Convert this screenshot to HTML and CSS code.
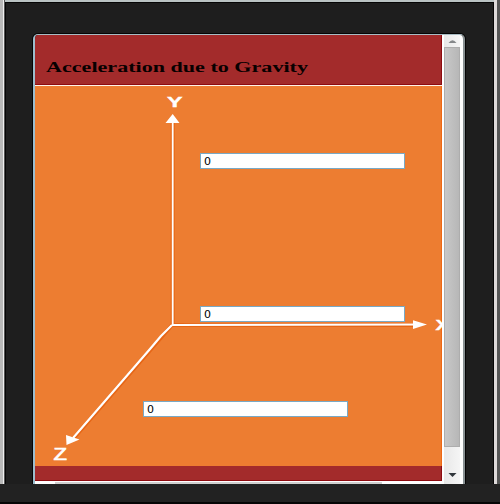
FILE: index.html
```
<!DOCTYPE html>
<html lang="en">
<head>
<meta charset="utf-8">
<title>Acceleration due to Gravity</title>
<link rel="stylesheet" href="styles.css">
</head>
<body>
<div class="device">
  <main class="screen">
    <section class="content">
      <header class="header">
        <svg class="title" width="290" height="24" role="heading" aria-level="1"><text x="0" y="15" textLength="262" lengthAdjust="spacingAndGlyphs">Acceleration due to Gravity</text></svg>
      </header>
      <div class="diagram">
        <svg class="axes" width="407" height="380" viewBox="35 86 407 380">
          <g class="halo">
            <path d="M172.700 122V325H416M172 325L73 439"/>
          </g>
          <path class="line" d="M172.700 122V325"/>
          <path class="line" d="M172 325L415 324.500"/>
          <path class="line diagonal" d="M172 325L161 336L150 349L73 438"/>
          <path class="arrow" d="M172.700 114L179.500 123H165.500ZM413 320.300L427 324.500L413 329ZM66 435L79.500 439.500L66.500 445Z"/>
          <text x="167" y="107" textLength="15.500" lengthAdjust="spacingAndGlyphs">Y</text>
          <text x="435.500" y="330" textLength="14" lengthAdjust="spacingAndGlyphs">X</text>
          <text class="z" x="53.500" y="459.500" textLength="13.500" lengthAdjust="spacingAndGlyphs">Z</text>
        </svg>
        <input class="field field-y" type="text" value="0" aria-label="Y">
        <input class="field field-x" type="text" value="0" aria-label="X">
        <input class="field field-z" type="text" value="0" aria-label="Z">
      </div>
      <div class="footer"></div>
      <div class="hscroll"><div class="hthumb"></div></div>
    </section>
    <aside class="vscroll">
      <svg width="19" height="12"><path d="M5.500 8Q9.500 2.500 13.500 8Z" fill="#85888a"/></svg>
      <div class="vthumb"></div>
      <svg class="down" width="19" height="37"><path d="M5.500 26H13.500L9.500 30Z" fill="#30363b"/></svg>
    </aside>
  </main>
</div>
<div class="base"></div>
</body>
</html>
```
FILE: styles.css
```
* { box-sizing: border-box; }
body {
  margin: 0;
  width: 500px;
  height: 504px;
  overflow: hidden;
  background: #222;
}
.device {
  height: 484px;
  padding: 32px 29px 0 28px;
  border-style: solid;
  border-color: #bac3c3;
  border-width: 2px 6px 0 5px;
  background: #1e1e1e;
  box-shadow: inset 1px 1px 0 #050505, inset -1px 0 0 #050505;
  background-clip: padding-box;
  border-image: linear-gradient(90deg, #b9b9b9 0 3px, #efefef 3px 4px, #555 4px 5px, #bac3c3 5px 494px, #dedada 494px 497px, #555 497px) 2 6 0 5;
}
.screen {
  display: flex;
  width: 432px;
  height: 450px;
  overflow: hidden;
  border: 1px solid #a9bcc4;
  border-left: 2px solid #9dbdcd;
  border-right: 2px solid #899193;
  border-bottom: 0;
  border-radius: 5px 5px 0 0;
  box-shadow: 0 0 0 1px #050505;
}
.content { width: 407px; }
.header {
  height: 50px;
  padding: 22px 0 0 11px;
  background: #a32b2b;
  border-bottom: 1px solid #8e0b10;
  box-shadow: inset -1px 0 0 #8e0b10;
}
.title { display: block; }
.title text {
  font: bold 14px "Liberation Serif", serif;
  fill: #080000;
}
.diagram {
  position: relative;
  height: 381px;
  background: #ed7d31;
  border-top: 1px solid #fff3e8;
  box-shadow: inset -1px 0 0 #ef6814;
}
.axes { display: block; }
.halo {
  fill: none;
  stroke: #e66616;
  stroke-width: 4;
}
.line {
  fill: none;
  stroke: #fff;
  stroke-width: 1.800;
}
.diagonal { stroke-width: 2.200; }
.arrow { fill: #fff; }
.axes text {
  font: bold 15.500px "Liberation Sans", sans-serif;
  fill: #fff;
  stroke: #fff;
  stroke-width: .4px;
}
.axes .z { font-size: 16px; font-weight: normal; stroke-width: .6px; }
.field {
  position: absolute;
  width: 205px;
  height: 16px;
  padding: 0 3px;
  border: 1px solid #79a9c5;
  background: #fff;
  color: #000;
  font: 11px "DejaVu Sans", sans-serif;
  line-height: 14px;
}
.field-y { left: 165px; top: 67px; }
.field-x { left: 165px; top: 220px; }
.field-z { left: 108px; top: 315px; }
.footer {
  height: 15px;
  background: #a32b2b;
  border-bottom: 1px solid #8e0b10;
  box-shadow: inset -1px 0 0 #8e0b10;
}
.hscroll {
  height: 3px;
  padding: 1px 60px 0 20px;
  background: #fff;
}
.hthumb { height: 2px; background: #d0d0d0; }
.vscroll {
  width: 21px;
  padding: 0 1px;
  background: linear-gradient(90deg, #fff 0 2px, #e8e8e8 2px, #f5f5f5 18px, #fff 18px);
}
.vscroll svg { display: block; }
.vthumb {
  width: 16px;
  height: 400px;
  margin-left: 1px;
  border: 1px solid #adadad;
  background: linear-gradient(90deg, #c8c8c8, #b7b7b7);
}
.base {
  height: 20px;
  background: #222;
  border-bottom: 2px solid #050505;
}
```
